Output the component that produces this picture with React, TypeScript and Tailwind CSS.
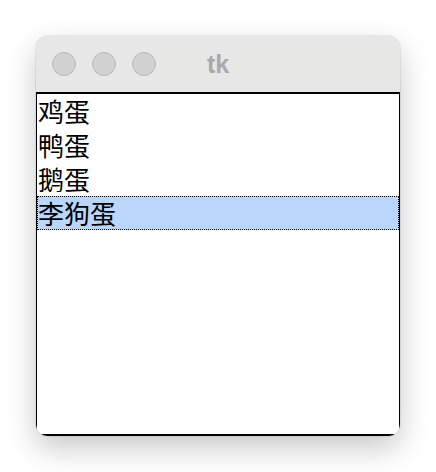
import { useState } from "react";

const items = ["鸡蛋", "鸭蛋", "鹅蛋", "李狗蛋"];

export default function App() {
  const [selected, setSelected] = useState(3);

  return (
    <div className="h-[472px] w-[436px] bg-white pl-[36px] pt-[36px]">
      <div className="flex h-[400px] w-[364px] flex-col overflow-hidden rounded-[12px] bg-[#e7e7e6] shadow-[0_12px_30px_rgba(0,0,0,0.22),0_0_0_1px_rgba(0,0,0,0.06)]">
        {/* Title bar */}
        <div className="relative flex h-[56px] items-center gap-[16px] px-[16px]">
          <span className="h-[24px] w-[24px] rounded-full border border-[#b9b9b9] bg-[#d1d1d1]" />
          <span className="h-[24px] w-[24px] rounded-full border border-[#b9b9b9] bg-[#d1d1d1]" />
          <span className="h-[24px] w-[24px] rounded-full border border-[#b9b9b9] bg-[#d1d1d1]" />
          <span className="absolute left-0 right-0 top-[10px] text-center font-['Liberation_Sans',Arial,sans-serif] text-[25px] font-bold text-[#a9a9a9]">
            tk
          </span>
        </div>

        {/* Listbox */}
        <div className="flex-1 border-x-[1.5px] border-b-2 border-t-2 border-black bg-white">
          {items.map((item, i) => (
            <div
              key={item}
              onClick={() => setSelected(i)}
              className={[
                "flex h-[34px] items-center font-['Noto_Sans_CJK_SC',sans-serif] text-[26px] leading-none text-black",
                i === selected
                  ? "border border-dotted border-black bg-[#bad6fb]"
                  : "border border-transparent",
              ].join(" ")}
            >
              {item}
            </div>
          ))}
        </div>
      </div>
    </div>
  );
}
